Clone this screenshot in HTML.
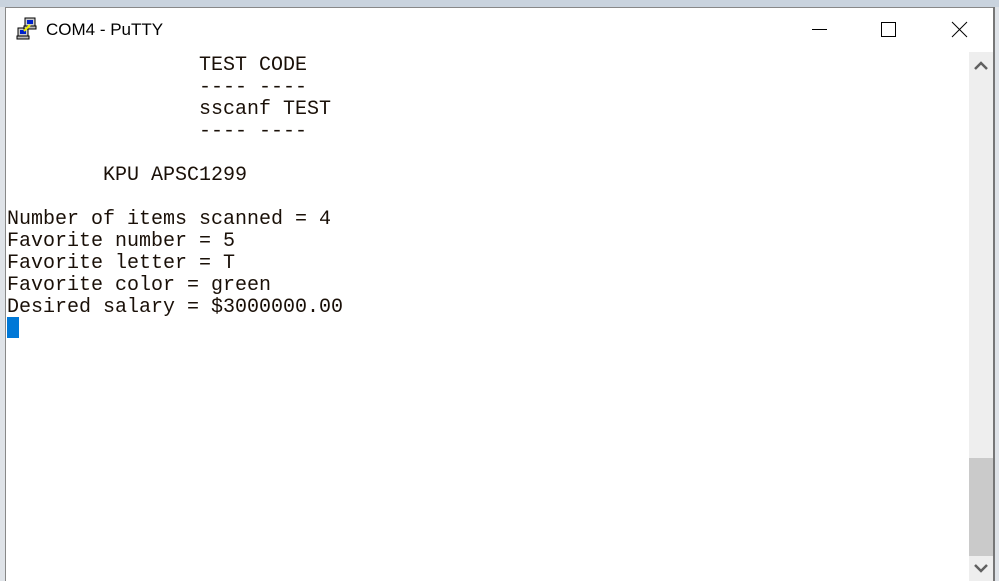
<!DOCTYPE html>
<html><head><style>
body{margin:0;width:999px;height:581px;overflow:hidden;background:#dfe3e8;position:relative;font-family:"Liberation Sans",sans-serif}
#win{position:absolute;left:5px;top:7px;width:988px;height:574px;background:#fff;border-left:1px solid #888;border-top:1px solid #888;box-sizing:border-box}
#title{position:absolute;left:46px;top:20px;font-size:17px;color:#000}
pre{position:absolute;left:7px;top:55px;margin:0;font-family:"Liberation Mono",monospace;font-size:20px;line-height:22px;color:#1a1008}
#cur{position:absolute;left:7px;top:317px;width:12px;height:21px;background:#0078d7}
#sb{position:absolute;left:969px;top:52px;width:24px;height:529px;background:#eeeeee}
#thumb{position:absolute;left:969px;top:458px;width:24px;height:98px;background:#cacaca}
.ic{position:absolute}
</style></head><body>
<div style="position:absolute;left:0;top:0;width:999px;height:7px;background:#c9d3de"></div>
<div id="win"></div>
<svg class="ic" style="left:16px;top:17px" width="24" height="24" viewBox="0 0 24 24">
<rect x="9" y="1" width="10" height="8" fill="#ccc" stroke="#000"/><rect x="11" y="3" width="6" height="4" fill="#0022cc"/>
<rect x="2" y="11" width="10" height="8" fill="#ccc" stroke="#000"/><rect x="4" y="13" width="6" height="4" fill="#0022cc"/>
<rect x="1" y="19" width="12" height="3" fill="#bbb" stroke="#000"/><rect x="8" y="9" width="12" height="3" fill="#bbb" stroke="#000"/>
<path d="M8 14 L14 8" stroke="#ee0" stroke-width="2"/></svg>
<div id="title">COM4 - PuTTY</div>
<svg class="ic" style="left:810px;top:20px" width="170" height="20">
<line x1="2" y1="9.5" x2="17" y2="9.5" stroke="#000"/>
<rect x="71.5" y="2.5" width="14" height="14" fill="none" stroke="#000"/>
<path d="M142 2 L157 17 M157 2 L142 17" stroke="#000"/></svg>
<pre>                TEST CODE
                ---- ----
                sscanf TEST
                ---- ----

        KPU APSC1299

Number of items scanned = 4
Favorite number = 5
Favorite letter = T
Favorite color = green
Desired salary = $3000000.00</pre>
<div id="cur"></div>
<div id="sb"></div>
<div id="thumb"></div>
<svg class="ic" style="left:973px;top:60px" width="16" height="12"><path d="M2 9 L8 3 L14 9" stroke="#606060" stroke-width="2.5" fill="none"/></svg>
<svg class="ic" style="left:973px;top:562px" width="16" height="12"><path d="M2 3 L8 9 L14 3" stroke="#606060" stroke-width="2.5" fill="none"/></svg>
<div style="position:absolute;left:993px;top:7px;width:2px;height:574px;background:#777"></div>
</body></html>
